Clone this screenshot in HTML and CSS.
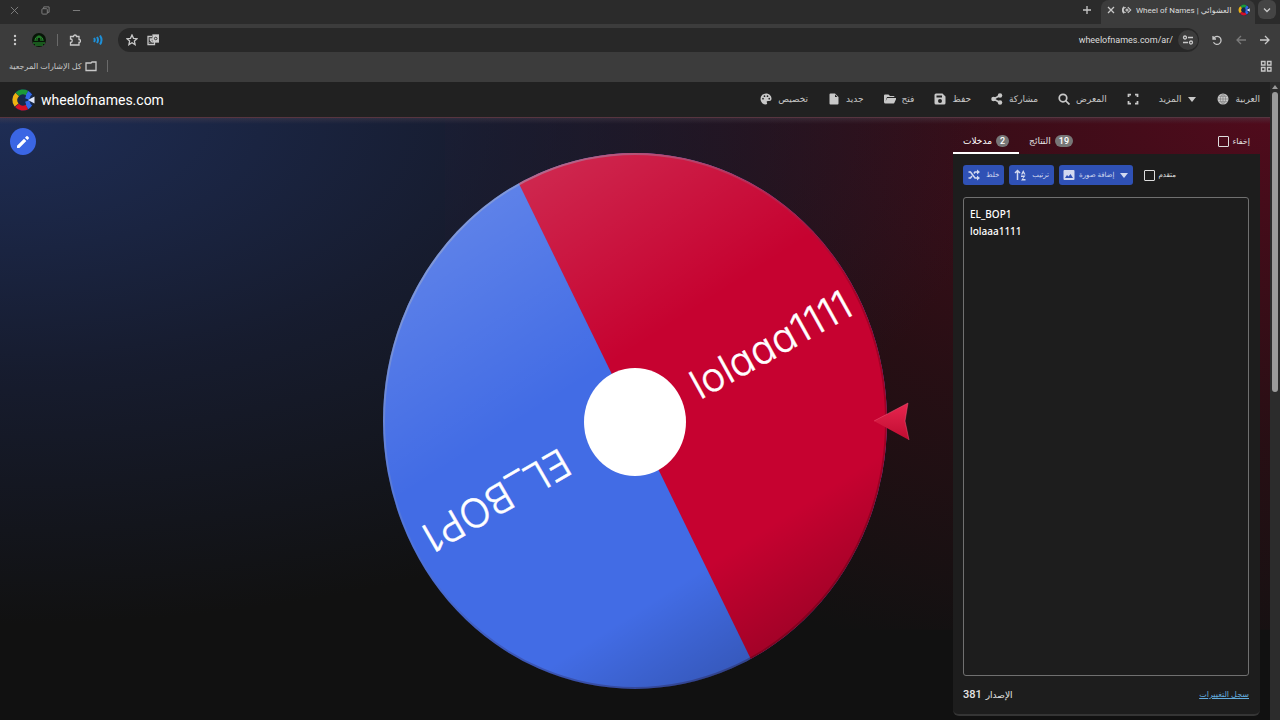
FILE: index.html
```
<!DOCTYPE html>
<html lang="ar">
<head>
<meta charset="utf-8">
<title>Wheel of Names | العشوائي</title>
<link rel="stylesheet" href="styles.css">
</head>
<body>
<svg class="defs" aria-hidden="true">
  <symbol id="logo" viewBox="0 0 24 24">
    <circle cx="12" cy="12" r="11" fill="#16284a"/>
    <g fill="none" stroke-width="5">
      <path d="M6.300 6.300a8 8 0 0 1 9.700-1.200" stroke="#1c9a38"/>
      <path d="M5.600 17a8 8 0 0 1 .6-10.600" stroke="#eeb211"/>
      <path d="M16 19a8 8 0 0 1-10-1.600" stroke="#d50f25"/>
      <path d="M15 8l4 1.500M15 16l4-1.500" stroke="#3369e8"/>
      <path d="M16 5.100a8 8 0 0 1 3 3M19 16a8 8 0 0 1-3 3" stroke="#3369e8"/>
    </g>
    <path d="M17 12l6.500-3.500v7z" fill="#dfe6f7"/>
  </symbol>
</svg>

<div class="browser">
  <div class="tabstrip">
    <div class="window-buttons">
      <button aria-label="إغلاق"><svg viewBox="0 0 10 10"><path d="M1 1l8 8M9 1l-8 8"/></svg></button>
      <button aria-label="استعادة"><svg viewBox="0 0 10 10"><rect x="1" y="3" width="6" height="6" rx="1"/><path d="M3 3V1h6v6H7"/></svg></button>
      <button aria-label="تصغير"><svg viewBox="0 0 10 10"><path d="M1 5h8"/></svg></button>
    </div>
    <div class="tab-area">
      <button class="new-tab" aria-label="علامة تبويب جديدة"><svg viewBox="0 0 10 10"><path d="M5 1v8M1 5h8"/></svg></button>
      <div class="browser-tab">
        <button aria-label="إغلاق التبويب"><svg viewBox="0 0 10 10"><path d="M2 2l6 6M8 2l-6 6"/></svg></button>
        <svg class="audio" viewBox="0 0 12 10"><circle cx="6" cy="5" r="1.200"/><path d="M4.500 2a3 3 0 0 0 0 6M2.500 1a5 5 0 0 0 0 8M7 1.500l3.500 3.500L7 8.500"/></svg>
        <span class="tab-title">Wheel of Names | العشوائي</span>
        <svg class="favicon"><use href="#logo"/></svg>
      </div>
      <button class="tab-search" aria-label="بحث"><svg viewBox="0 0 10 10"><path d="M2 3.500l3 3 3-3"/></svg></button>
    </div>
  </div>

  <div class="toolbar">
    <div class="tools">
      <button aria-label="القائمة"><svg viewBox="0 0 12 12" class="solid"><circle cx="6" cy="2" r="1.200"/><circle cx="6" cy="6" r="1.200"/><circle cx="6" cy="10" r="1.200"/></svg></button>
      <button class="avatar" aria-label="الحساب"><svg viewBox="0 0 14 14"><circle cx="7" cy="7" r="7" fill="#071507" stroke="none"/><path d="M3 8a4 5 0 1 1 8 0M5 8V6a2 2 0 0 1 4 0v2M1 10h12M3 12h8" stroke="#2d9d35"/></svg></button>
      <span class="divider"></span>
      <button aria-label="الإضافات"><svg viewBox="0 0 12 12"><path d="M1.500 2.500h3a1.500 1.500 0 0 1 3 0h2.500v3a1.500 1.500 0 0 1 0 3V11H1.500V8.500a1.700 1.700 0 0 0 0-3.500z"/></svg></button>
      <button class="cast" aria-label="صوت"><svg viewBox="0 0 12 12"><path d="M2 4q1.500 2 0 4M5 3q2 3 0 6M8 1.500q3 4.500 0 9"/></svg></button>
    </div>
    <div class="address">
      <button aria-label="إشارة مرجعية"><svg viewBox="0 0 12 12"><path d="M6 1l1.500 3.300 3.500.4-2.600 2.400.7 3.500L6 8.800l-3.100 1.800.7-3.500L1 4.700l3.500-.4z"/></svg></button>
      <button aria-label="ترجمة"><svg viewBox="0 0 12 12"><path d="M5 2.500H1v8h6.500V8M2.500 5h3.500M4.500 4.500C4.500 7 3.500 8 2.500 8.500M3 6l2.500 2.500"/><rect x="6" y="1" width="5.500" height="7" fill="#ccc"/><circle cx="8.700" cy="4.500" r="1.300" stroke="#333" stroke-width="1"/></svg></button>
      <input class="url" dir="ltr" aria-label="العنوان" value="wheelofnames.com/ar/">
      <button class="site-info" aria-label="معلومات الموقع"><svg viewBox="0 0 12 12"><circle cx="3" cy="3.500" r="1.500"/><circle cx="9" cy="8.500" r="1.500"/><path d="M6 3.500h5M1 8.500h5"/></svg></button>
    </div>
    <div class="history">
      <button aria-label="إعادة تحميل"><svg viewBox="0 0 12 12"><path d="M2 2v3h3M2.300 5A4 4 0 1 1 2.500 8.200"/></svg></button>
      <button class="dim" aria-label="تقدم"><svg viewBox="0 0 12 12"><path d="M11 6H2M6 2L2 6l4 4"/></svg></button>
      <button aria-label="رجوع"><svg viewBox="0 0 12 12"><path d="M1 6h9M6 2l4 4-4 4"/></svg></button>
    </div>
  </div>

  <div class="bookmarks">
    <button class="all-bookmarks">كل الإشارات المرجعية<svg viewBox="0 0 12 12"><path d="M1 3h5l1-1h4v8.500H1z"/></svg></button>
    <span class="divider"></span>
    <button class="apps" aria-label="التطبيقات"><svg viewBox="0 0 12 12"><path d="M1.500 1.500h3.500v3.500H1.500zM7.500 1.500H11v3.500H7.500zM1.500 7.500h3.500V11H1.500zM7.500 7.500H11V11H7.500z"/></svg></button>
  </div>
</div>

<div class="viewport">
  <div class="site">
    <header class="site-header">
      <a class="brand" href="#"><svg><use href="#logo"/></svg><span>wheelofnames.com</span></a>
      <nav class="menu">
        <button><svg viewBox="0 0 24 24"><path d="M12 1a11 11 0 1 0 0 22c1.500 0 2.300-1 2.300-2.300 0-1.600-1.200-2-.8-3.500.3-1 1.300-1.300 2.500-1.300h2.500A4.500 4.500 0 0 0 23 11c0-5.500-5-10-11-10zM6 13a1.700 1.700 0 1 1 0-3.400A1.700 1.700 0 0 1 6 13zm3-5a1.700 1.700 0 1 1 0-3.400A1.700 1.700 0 0 1 9 8zm6 0a1.700 1.700 0 1 1 0-3.400A1.700 1.700 0 0 1 15 8zm3.500 5a1.700 1.700 0 1 1 0-3.400 1.700 1.700 0 0 1 0 3.400z"/></svg>تخصيص</button>
        <button><svg viewBox="0 0 24 24"><path d="M5 1h9l7 7v13a2 2 0 0 1-2 2H5a2 2 0 0 1-2-2V3a2 2 0 0 1 2-2zm9 2v5h5z"/></svg>جديد</button>
        <button><svg viewBox="0 0 24 24"><path d="M19 21H3a3 3 0 0 1-3-3V5a2 2 0 0 1 2-2h7l3 3h7a2 2 0 0 1 2 2H6L3 17l3.500-7H25l-4 9a3 3 0 0 1-2 2z"/></svg>فتح</button>
        <button><svg viewBox="0 0 24 24"><path d="M17 1H4a3 3 0 0 0-3 3v16a3 3 0 0 0 3 3h16a3 3 0 0 0 3-3V7zM5 5h11v4H5zm7 15a4 4 0 1 1 0-8 4 4 0 0 1 0 8z"/></svg>حفظ</button>
        <button><svg viewBox="0 0 24 24"><circle cx="5" cy="12" r="4.500"/><circle cx="18" cy="5" r="4.500"/><circle cx="18" cy="19" r="4.500"/><path d="M5 12l13-7M5 12l13 7" stroke="currentColor" stroke-width="3"/></svg>مشاركة</button>
        <button><svg viewBox="0 0 24 24"><g fill="none" stroke="currentColor" stroke-width="3.500"><circle cx="10" cy="10" r="7.500"/><path d="M15 15l8 8"/></g></svg>المعرض</button>
        <button aria-label="ملء الشاشة"><svg viewBox="0 0 24 24"><path d="M8 3H3v5M16 3h5v5M8 21H3v-5M16 21h5v-5" fill="none" stroke="currentColor" stroke-width="3.500"/></svg></button>
        <button>المزيد<svg class="caret" viewBox="0 0 10 10"><path d="M1 3h8L5 8z"/></svg></button>
        <button><svg viewBox="0 0 24 24"><circle cx="12" cy="12" r="11"/><path d="M1 12h22M12 1v22M3 6.500h18M3 17.500h18M12 1C5 7 5 17 12 23M12 1c7 6 7 16 0 22" fill="none" stroke="#666" stroke-width="1"/></svg>العربية</button>
      </nav>
    </header>

    <main class="stage">
      <div class="edit-cell">
        <button class="edit" aria-label="تعديل"><svg viewBox="0 0 24 24"><path d="M3 17.500V21h3.500L17 10.500 13.500 7zM20.500 7a1.500 1.500 0 0 0 0-2L19 3.500a1.500 1.500 0 0 0-2 0L15 5.500 18.500 9z"/></svg></button>
      </div>
      <svg class="wheel" viewBox="0 0 504 537" role="img" aria-label="عجلة الأسماء">
        <defs>
          <clipPath id="disc"><ellipse cx="252" cy="268" rx="252" ry="268"/></clipPath>
          <linearGradient id="shine" x1="0.200" y1="0" x2="0.800" y2="1">
            <stop offset="0" stop-color="#fff" stop-opacity=".18"/>
            <stop offset=".4" stop-color="#fff" stop-opacity="0"/>
            <stop offset=".76" stop-color="#000" stop-opacity="0"/>
            <stop offset=".92" stop-color="#000" stop-opacity=".17"/>
          </linearGradient>
          <linearGradient id="rim" x1="0" y1="0" x2="1" y2="1">
            <stop offset="0" stop-color="#b5bfd8" stop-opacity=".7"/>
            <stop offset=".4" stop-color="#8090b0" stop-opacity=".2"/>
            <stop offset=".6" stop-color="#200" stop-opacity=".2"/>
            <stop offset="1" stop-color="#200" stop-opacity=".3"/>
          </linearGradient>
          <linearGradient id="arrow" x1="0" y1="0" x2="0" y2="1">
            <stop offset="0" stop-color="#e8264f"/>
            <stop offset="1" stop-color="#c00c31"/>
          </linearGradient>
        </defs>
        <g clip-path="url(#disc)">
          <path class="slice-blue" d="M0 0h504v537H0z"/>
          <path class="slice-red" d="M121 0L383 537H504V0z"/>
          <path d="M0 0h504v537H0z" fill="url(#shine)"/>
        </g>
        <ellipse cx="252" cy="268" rx="251" ry="267" fill="none" stroke="url(#rim)" stroke-width="2"/>
        <text class="entry" transform="translate(317 247) rotate(-29)">lolaaa1111</text>
        <text class="entry" transform="translate(177 294) rotate(150)">EL_BOP1</text>
        <ellipse cx="252" cy="269" rx="51" ry="54" fill="#fff"/>
        <path d="M491 268l34-18-3 18 4 19z" fill="url(#arrow)"/>
        <path d="M491 268l34-18-3 18 4 19" fill="none" stroke="#f0587a" stroke-opacity=".5"/>
      </svg>
      <section class="side">
        <div class="panel-tabs">
          <button class="panel-tab active">مدخلات<span class="badge">2</span></button>
          <button class="panel-tab">النتائج<span class="badge">19</span></button>
          <label class="check hide-check"><input type="checkbox">إخفاء</label>
        </div>
        <div class="panel">
          <div class="actions">
            <button><svg viewBox="0 0 24 24"><path d="M1 6h4l9 12h5M1 18h4l3-4M12 9l2-3h5" fill="none" stroke="currentColor" stroke-width="3"/><path d="M18 1l6 5-6 5zM18 13l6 5-6 5z"/></svg>خلط</button>
            <button><svg viewBox="0 0 24 24"><path d="M7 22V4M2 8l5-5 5 5" fill="none" stroke="currentColor" stroke-width="3"/><path d="M14 11l4.500-9 4.500 9h-3l-1.500-3-1.500 3zM14 13h9l-5 7h5v3h-9l5-7h-5z"/></svg>ترتيب</button>
            <button><svg viewBox="0 0 24 24"><path d="M3 2h18a2 2 0 0 1 2 2v16a2 2 0 0 1-2 2H3a2 2 0 0 1-2-2V4a2 2 0 0 1 2-2zm1 16h16l-5-8-4 5-3-3z"/></svg>إضافة صورة<svg class="caret" viewBox="0 0 10 10"><path d="M1 3h8L5 8z"/></svg></button>
            <label class="check small"><input type="checkbox">متقدم</label>
          </div>
          <textarea class="names" dir="ltr" spellcheck="false" aria-label="مدخلات">EL_BOP1
lolaaa1111</textarea>
          <div class="panel-foot">
            <span class="version"><b>381</b> <span>الإصدار</span></span>
            <a href="#">سجل التغييرات</a>
          </div>
        </div>
      </section>
    </main>
  </div>
  <div class="scrollbar" aria-hidden="true">
    <svg viewBox="0 0 10 10"><path d="M5 3l3 4H2z"/></svg>
    <div class="thumb"></div>
  </div>
</div>
</body>
</html>
```
FILE: styles.css
```
* { box-sizing: border-box; }
body {
  margin: 0;
  height: 100vh;
  display: flex;
  flex-direction: column;
  background: #111;
  color: #e4e4e4;
  font-family: Roboto, "DejaVu Sans", sans-serif;
  font-size: 10px;
  overflow: hidden;
}
button {
  font: inherit;
  color: inherit;
  background: none;
  border: 0;
  padding: 0;
  display: flex;
  align-items: center;
  justify-content: center;
  white-space: nowrap;
}
svg { display: block; flex: none; }
.defs { position: absolute; width: 0; height: 0; }

/* Browser frame */
.browser { background: #3c3c3c; color: #c8c8c8; }
.browser svg { width: 12px; height: 12px; fill: none; stroke: currentColor; stroke-width: 1.3; }
.browser .solid { fill: currentColor; stroke: none; }
.tabstrip {
  display: flex;
  justify-content: space-between;
  height: 24px;
  background: #2b2b2b;
}
.window-buttons { display: flex; gap: 20px; padding: 0 9px 4px; color: #858585; }
.window-buttons svg { width: 11px; height: 9px; stroke-width: 1; }
.tab-area { display: flex; }
.new-tab { width: 28px; padding-bottom: 4px; }
.tab-area svg { width: 10px; height: 10px; }
.browser-tab {
  display: flex;
  align-items: center;
  gap: 4px;
  padding: 0 5px 4px;
  background: #3c3c3c;
  border-radius: 8px 8px 0 0;
  font-size: 8px;
}
.browser-tab .audio { margin-left: 2px; }
.tab-title { min-width: 98px; white-space: nowrap; color: #ddd; }
.browser-tab .favicon { width: 12px; height: 12px; stroke: none; }
.tab-search { width: 18px; height: 19px; margin: 0 4px 0 3px; background: #454545; border-radius: 6px; }
.toolbar { display: flex; align-items: center; height: 32px; gap: 14px; padding: 0 9px; }
.tools { display: flex; align-items: center; gap: 11px; }
.avatar svg { width: 14px; height: 14px; stroke-width: 1; }
.divider { width: 1px; height: 12px; background: #6a6a6a; }
.cast { color: #1e90d8; }
.browser .cast svg { stroke-width: 2; }
.address {
  flex: 1;
  display: flex;
  align-items: center;
  gap: 9px;
  height: 24px;
  padding: 0 1px 0 8px;
  background: #282828;
  border-radius: 12px;
}
.url {
  flex: 1;
  min-width: 0;
  padding: 0;
  border: 0;
  background: none;
  color: #ddd;
  font: 9px Roboto, sans-serif;
  text-align: right;
}
.site-info { width: 20px; height: 20px; margin-left: -4px; border-radius: 50%; background: #3c3c3c; }
.history { display: flex; gap: 12px; margin-left: -2px; }
.dim { color: #7a7a7a; }
.bookmarks { display: flex; align-items: center; gap: 10px; height: 26px; padding: 0 8px 6px 9px; }
.all-bookmarks { gap: 3px; font-size: 8px; }
.apps { margin-left: auto; }

/* Page */
.viewport { flex: 1; display: flex; min-height: 0; }
.site { flex: 1; display: flex; flex-direction: column; min-width: 0; }
.site-header {
  display: flex;
  align-items: center;
  justify-content: space-between;
  height: 36px;
  padding: 0 10px 0 11px;
  background: #212121;
  border-bottom: 1px solid #573540;
}
.brand { display: flex; align-items: center; gap: 6px; color: #fff; font-size: 14px; text-decoration: none; }
.brand svg { width: 24px; height: 24px; }
.menu { display: flex; gap: 20px; padding-bottom: 2px; color: #c8c8c8; font-size: 9px; }
.menu button { gap: 6px; }
.menu svg { width: 12px; height: 12px; fill: currentColor; }
.menu .caret { width: 10px; height: 10px; }
.stage {
  flex: 1;
  min-height: 0;
  display: grid;
  grid-template-columns: 1fr auto 1fr;
  grid-template-rows: minmax(0, 1fr);
  background:
    linear-gradient(#50445066, #50445000 6px),
    radial-gradient(ellipse at 0 0, #1e2d55 0, #1a234299 35%, #151a2600 70%) 0 0 / 80% 85% no-repeat,
    radial-gradient(ellipse at 100% 0, #500b1c 0, #360d1699 45%, #1a0f1200 80%) 100% 0 / 65% 85% no-repeat,
    #111;
}
.edit-cell { padding: 10px; }
.edit { width: 26px; height: 27px; border-radius: 50%; background: #3b66e4; }
.edit svg { width: 16px; height: 16px; fill: #fff; }
.wheel { height: calc(100% - 65px); margin-top: 35px; aspect-ratio: 504 / 537; overflow: visible; }
.slice-blue { fill: #426ce5; }
.slice-red { fill: #c60230; }
.entry { fill: #fff; stroke: #fff; stroke-width: 0.4; font-family: Inter, sans-serif; font-size: 40px; font-weight: 300; font-feature-settings: "cv11"; }

/* Entries panel */
.side {
  justify-self: end;
  width: 307px;
  margin: 11px 10px 4px 0;
  display: flex;
  flex-direction: column;
}
.panel-tabs { display: flex; height: 25px; padding-right: 10px; }
.panel-tab { gap: 4px; padding: 0 10px; font-size: 9px; border-bottom: 2px solid transparent; }
.panel-tab.active { color: #fff; border-color: #fff; }
.badge {
  padding: 0 4px;
  border-radius: 6px;
  background: #777;
  color: #fff;
  font-size: 9px;
  font-weight: 500;
  line-height: 12px;
}
.check { display: flex; align-items: center; gap: 4px; font-size: 8px; }
.check input {
  appearance: none;
  width: 11px;
  height: 11px;
  margin: 0;
  border: 1px solid #ddd;
  border-radius: 1px;
}
.hide-check { margin-left: auto; }
.panel {
  flex: 1;
  min-height: 0;
  display: flex;
  flex-direction: column;
  padding: 11px 11px 12px 10px;
  background: #1d1d1d;
  border-radius: 0 0 6px 6px;
  border-bottom: 2px solid #353535;
}
.actions { display: flex; gap: 5px; }
.actions button {
  height: 20px;
  gap: 6px;
  padding: 0 5px;
  border-radius: 3px;
  background: #2f51b5;
  color: #d3daf0;
  font-size: 7px;
}
.actions button:nth-child(3) { gap: 4px; padding: 0 4px; }
.actions svg { width: 12px; height: 12px; fill: currentColor; }
.actions .caret { width: 10px; height: 10px; }
.small { margin-left: 6px; font-size: 7px; }
.names {
  flex: 1;
  margin: 12px 0;
  padding: 8px 6px;
  border: 1px solid #707070;
  border-radius: 3px;
  background: #1d1d1d;
  color: #fff;
  font: 500 10px/17px "Noto Sans", sans-serif;
  resize: none;
}
.panel-foot { display: flex; justify-content: space-between; align-items: center; font-size: 9px; line-height: 14px; }
.panel-foot a { color: #63acdd; font-size: 8px; }
.version { display: flex; gap: 4px; }
.version b { font-size: 11px; font-weight: 500; }

.scrollbar { width: 10px; background: #2c2c2c; display: flex; flex-direction: column; align-items: center; }
.scrollbar svg { width: 10px; height: 10px; fill: #9a9a9a; }
.thumb { width: 6px; height: 47%; border-radius: 3px; background: #9b9b9b; }
```
